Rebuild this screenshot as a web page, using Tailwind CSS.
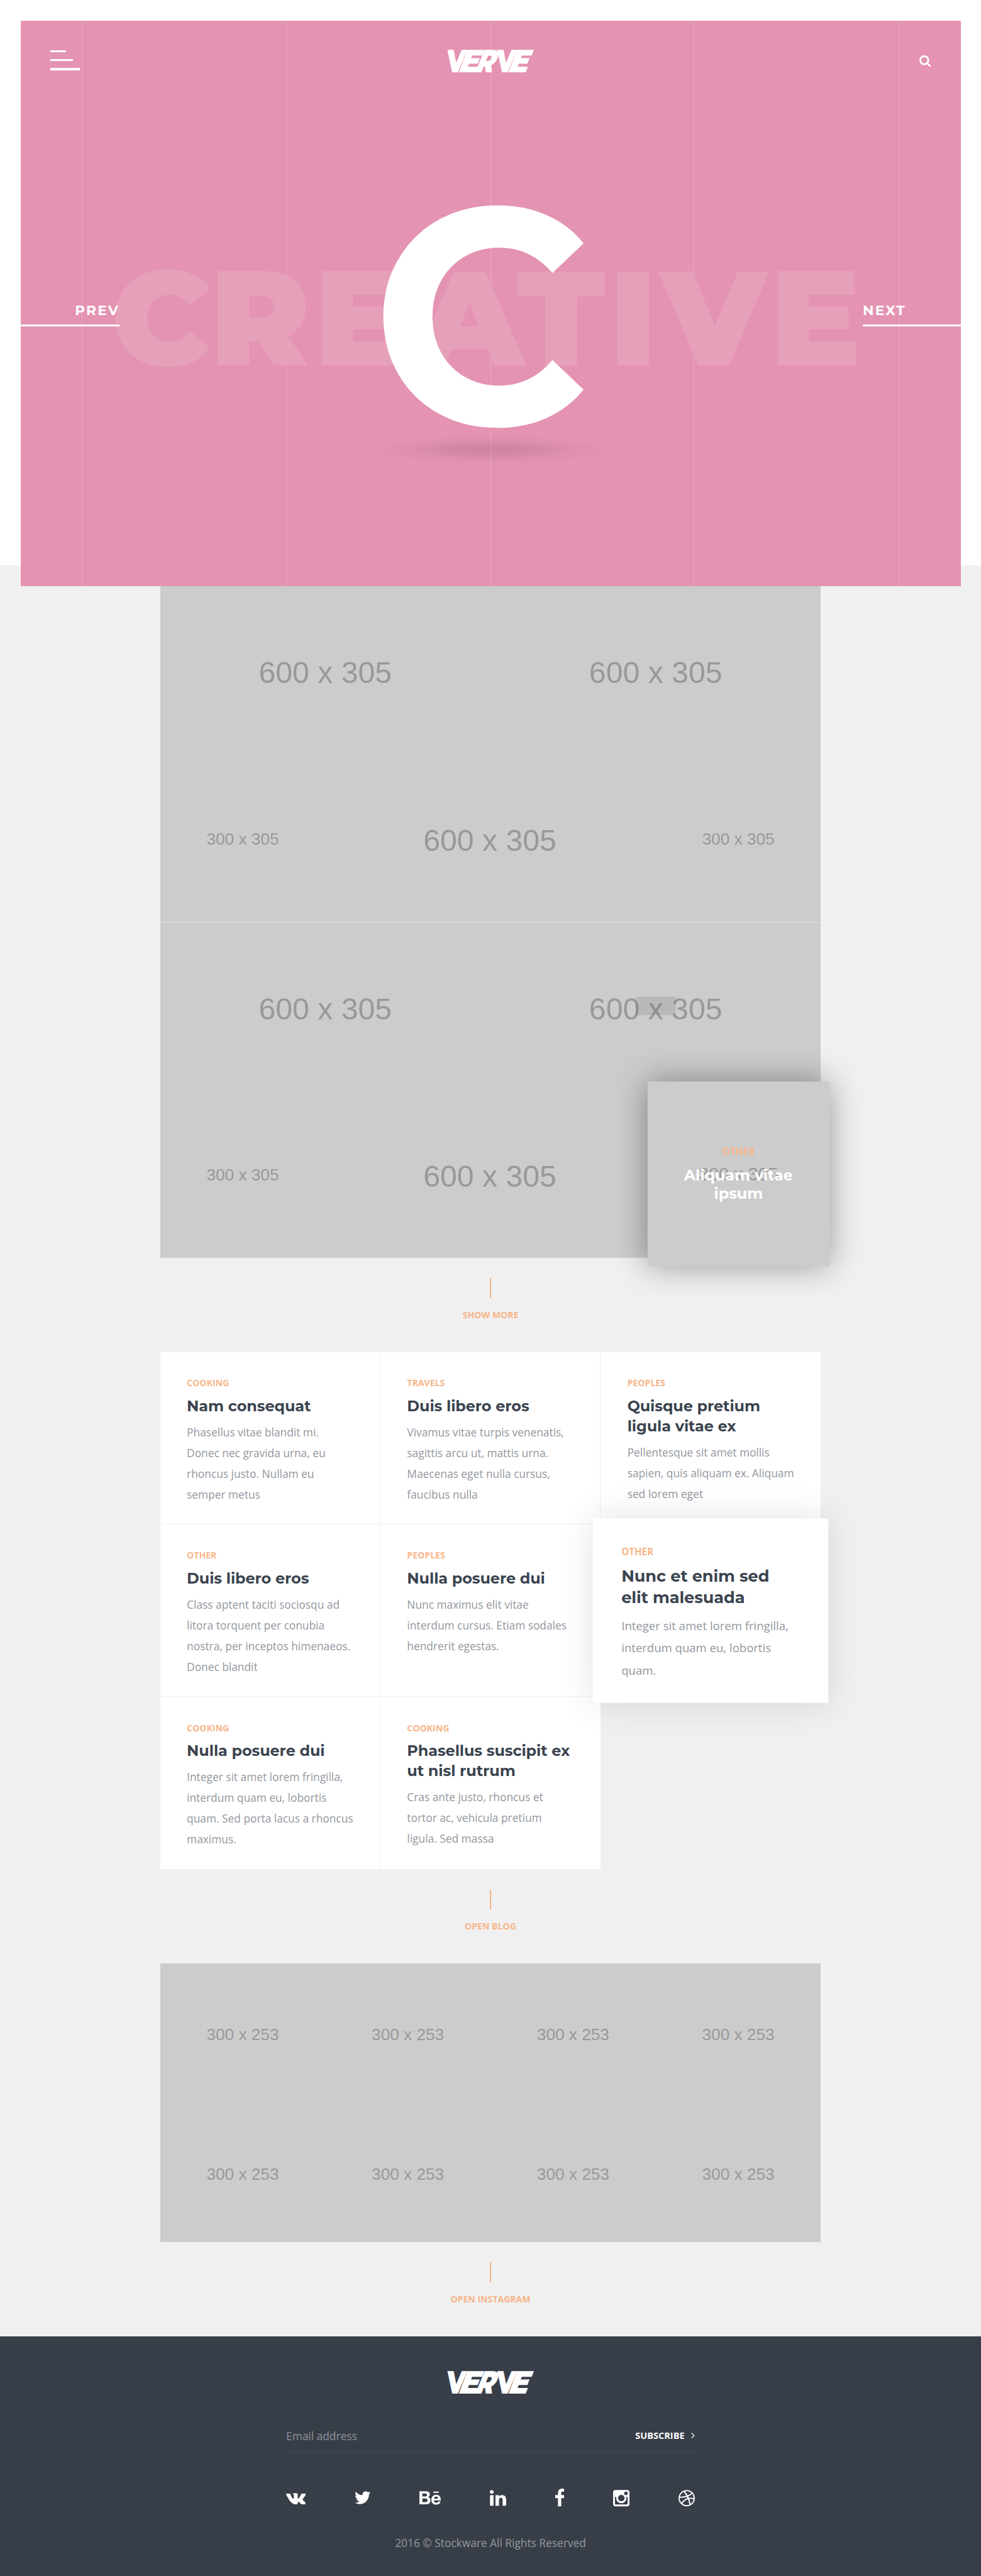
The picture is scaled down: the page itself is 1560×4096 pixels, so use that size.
<!DOCTYPE html>
<html lang="en">
<head>
<meta charset="utf-8">
<title>Verve</title>
<script src="https://cdn.jsdelivr.net/npm/@tailwindcss/browser@4"></script>
</head>
<body class="bg-[#f0f0f0] font-['Open_Sans',sans-serif] antialiased">

<!-- Hero slider -->
<div class="h-[899.2px] bg-white px-[32.5px] pt-[32.5px]">
  <header class="relative z-10 h-[899.2px] overflow-hidden bg-[#e493b2]">
    <!-- column guides -->
    <i class="absolute inset-y-0 left-[97.5px] w-px bg-white/20"></i>
    <i class="absolute inset-y-0 left-[423.5px] w-px bg-white/20"></i>
    <i class="absolute inset-y-0 left-[747.5px] w-px bg-white/20"></i>
    <i class="absolute inset-y-0 left-[1070.5px] w-px bg-white/20"></i>
    <i class="absolute inset-y-0 left-[1396.5px] w-px bg-white/20"></i>

    <!-- slide artwork -->
    <svg class="absolute inset-0 h-full w-full" viewBox="32.5 32.5 1495 899.2" font-family="Montserrat, sans-serif">
      <defs><radialGradient id="sh"><stop offset="0" stop-color="#4a2a40" stop-opacity=".15"/><stop offset=".35" stop-color="#4a2a40" stop-opacity=".11"/><stop offset=".7" stop-color="#4a2a40" stop-opacity=".03"/><stop offset="1" stop-color="#4a2a40" stop-opacity="0"/></radialGradient></defs>
      <text x="176.6 333.4 499.1 660.3 822 969 1050.6 1223.9" y="580.3" font-size="213.8" font-weight="900" fill="#e6a0ba">CREATIVE</text>
      <ellipse cx="780" cy="714.3" rx="188" ry="23" fill="url(#sh)"/>
      <text transform="matrix(.975 0 0 1 590.4 674.1)" font-size="489" font-weight="700" fill="#fff">C</text>
    </svg>

    <nav class="relative flex items-start justify-between pt-[46px] pr-[47.5px] pl-[47.6px]">
      <div class="mt-[1.7px] flex w-[135px] flex-col gap-[10.8px]">
        <i class="h-[3.25px] w-[25px] bg-white"></i>
        <i class="h-[3.25px] w-[36px] bg-white"></i>
        <i class="h-[3.25px] w-[46.8px] bg-white"></i>
      </div>
      <svg class="h-[35.8px] w-[135.4px] overflow-visible" viewBox="0 0 250 66" font-family="Montserrat, sans-serif" font-weight="900" font-size="94.3" fill="#fff">
        <text transform="matrix(.75 0 -.106 1 -6.5 66)">V</text><text transform="matrix(.92 0 -.38 1 27.5 66)">E</text><text transform="matrix(.77 0 -.41 1 77 66)">R</text><text transform="matrix(.75 0 -.106 1 140 66)">V</text><text transform="matrix(.92 0 -.38 1 173.5 66)">E</text>
      </svg>
      <div class="flex w-[135px] justify-end pt-[9.5px]">
        <svg class="size-[18.4px]" viewBox="64 128 1664 1664" fill="#fff"><path d="M1216 832q0-185-131.5-316.5t-316.5-131.5-316.5 131.5-131.5 316.5 131.5 316.5 316.5 131.5 316.5-131.5 131.5-316.5zm512 832q0 52-38 90t-90 38q-54 0-90-38l-343-342q-179 124-399 124-143 0-273.5-55.5t-225-150-150-225-55.5-273.5 55.5-273.5 150-225 225-150 273.5-55.5 273.5 55.5 225 150 150 225 55.5 273.5q0 220-124 399l343 343q37 37 37 90z"/></svg>
      </div>
    </nav>

    <div class="relative mt-[364.4px] flex justify-between font-['Montserrat',sans-serif] text-[21.67px] leading-[28px] font-bold tracking-[2.17px] text-white">
      <a class="w-[157.5px] border-b-[3.25px] border-white pb-[9px] text-right">PREV</a>
      <a class="w-[155.5px] border-b-[3.25px] border-white pb-[9px]">NEXT</a>
    </div>
  </header>
</div>

<!-- Works -->
<section class="mx-auto mt-[32.5px] w-[1050.8px] font-['Liberation_Sans',sans-serif] text-[#999]">
  <div class="h-[534.1px] bg-[#ccc]">
    <div class="grid h-1/2 grid-cols-2 place-items-center pt-[7.8px] text-[48.2px]"><span>600 x 305</span><span>600 x 305</span></div>
    <div class="grid h-1/2 grid-cols-4 place-items-center text-[26.2px]"><span class="pt-[4.6px]">300 x 305</span><span class="col-span-2 pt-[7.8px] pr-[2px] text-[48.2px]">600 x 305</span><span class="pt-[4.6px]">300 x 305</span></div>
  </div>
  <div class="h-[534.1px] border-t border-[#dfdfdf] bg-[#ccc]">
    <div class="grid h-1/2 grid-cols-2 place-items-center pt-[7.8px] text-[48.2px]"><span>600 x 305</span>
      <span class="relative">600 x 305<i class="absolute top-[17.5px] left-1/2 h-[28.7px] w-[63px] -translate-x-1/2 bg-[#3b444f]/14"></i></span></div>
    <div class="grid h-1/2 grid-cols-4 place-items-center text-[26.2px]"><span class="pt-[4.6px]">300 x 305</span><span class="col-span-2 pt-[7.8px] pr-[2px] text-[48.2px]">600 x 305</span>
      <div class="relative z-10 flex h-full w-full scale-[1.1] items-center justify-center bg-[#ccc] shadow-[0_0_44px_rgba(0,0,0,.38)]">
        <span class="pt-[3.4px]">300 x 305</span>
        <div class="absolute inset-0 flex flex-col items-center justify-center gap-[9.9px] text-center">
          <span class="font-['Open_Sans',sans-serif] text-[14.08px] leading-[20px] font-bold text-[#f7b588]">OTHER</span>
          <h3 class="font-['Montserrat',sans-serif] text-[21.67px] leading-[26.1px] font-bold text-white">Aliquam vitae<br>ipsum</h3>
        </div>
      </div>
    </div>
  </div>
</section>

<div class="flex h-[150px] flex-col items-center pt-[32.5px] text-[14.08px] leading-[20px] font-bold text-[#f7b588]"><i class="h-[31.4px] w-[2.2px] bg-[#f7b588]"></i><a class="mt-[16.8px]">SHOW MORE</a></div>

<!-- Blog -->
<section class="mx-auto grid w-[1050.8px] auto-rows-[274.1px] grid-cols-3 text-[17.33px] leading-[32.93px] whitespace-nowrap text-[#94979e]">
  <article class="border-r border-b border-[#f0f0f0] bg-white pt-[39.5px] pl-[42.5px]">
    <p class="text-[14.08px] leading-[20px] font-bold text-[#f7b588]">COOKING</p>
    <h3 class="mt-[10.7px] mb-[9.3px] font-['Montserrat',sans-serif] text-[23.83px] leading-[31.7px] font-bold text-[#3b444f]">Nam consequat</h3>
    <p>Phasellus vitae blandit mi.<br>Donec nec gravida urna, eu<br>rhoncus justo. Nullam eu<br>semper metus</p>
  </article>
  <article class="border-r border-b border-[#f0f0f0] bg-white pt-[39.5px] pl-[42.5px]">
    <p class="text-[14.08px] leading-[20px] font-bold text-[#f7b588]">TRAVELS</p>
    <h3 class="mt-[10.7px] mb-[9.3px] font-['Montserrat',sans-serif] text-[23.83px] leading-[31.7px] font-bold text-[#3b444f]">Duis libero eros</h3>
    <p>Vivamus vitae turpis venenatis,<br>sagittis arcu ut, mattis urna.<br>Maecenas eget nulla cursus,<br>faucibus nulla</p>
  </article>
  <article class="border-b border-[#f0f0f0] bg-white pt-[39.5px] pl-[42.5px]">
    <p class="text-[14.08px] leading-[20px] font-bold text-[#f7b588]">PEOPLES</p>
    <h3 class="mt-[10.7px] mb-[9.3px] font-['Montserrat',sans-serif] text-[23.83px] leading-[31.7px] font-bold text-[#3b444f]">Quisque pretium<br>ligula vitae ex</h3>
    <p>Pellentesque sit amet mollis<br>sapien, quis aliquam ex. Aliquam<br>sed lorem eget</p>
  </article>
  <article class="border-r border-b border-[#f0f0f0] bg-white pt-[39.5px] pl-[42.5px]">
    <p class="text-[14.08px] leading-[20px] font-bold text-[#f7b588]">OTHER</p>
    <h3 class="mt-[10.7px] mb-[9.3px] font-['Montserrat',sans-serif] text-[23.83px] leading-[31.7px] font-bold text-[#3b444f]">Duis libero eros</h3>
    <p>Class aptent taciti sociosqu ad<br>litora torquent per conubia<br>nostra, per inceptos himenaeos.<br>Donec blandit</p>
  </article>
  <article class="border-r border-b border-[#f0f0f0] bg-white pt-[39.5px] pl-[42.5px]">
    <p class="text-[14.08px] leading-[20px] font-bold text-[#f7b588]">PEOPLES</p>
    <h3 class="mt-[10.7px] mb-[9.3px] font-['Montserrat',sans-serif] text-[23.83px] leading-[31.7px] font-bold text-[#3b444f]">Nulla posuere dui</h3>
    <p>Nunc maximus elit vitae<br>interdum cursus. Etiam sodales<br>hendrerit egestas.</p>
  </article>
  <article class="relative z-10 scale-[1.07] bg-white pt-[39.5px] pl-[42.5px] shadow-[0_0_50px_rgba(0,0,0,.12)]">
    <p class="text-[14.08px] leading-[20px] font-bold text-[#f7b588]">OTHER</p>
    <h3 class="mt-[10.7px] mb-[9.3px] font-['Montserrat',sans-serif] text-[23.83px] leading-[31.7px] font-bold text-[#3b444f]">Nunc et enim sed<br>elit malesuada</h3>
    <p>Integer sit amet lorem fringilla,<br>interdum quam eu, lobortis<br>quam.</p>
  </article>
  <article class="border-r border-[#f0f0f0] bg-white pt-[39.5px] pl-[42.5px]">
    <p class="text-[14.08px] leading-[20px] font-bold text-[#f7b588]">COOKING</p>
    <h3 class="mt-[10.7px] mb-[9.3px] font-['Montserrat',sans-serif] text-[23.83px] leading-[31.7px] font-bold text-[#3b444f]">Nulla posuere dui</h3>
    <p>Integer sit amet lorem fringilla,<br>interdum quam eu, lobortis<br>quam. Sed porta lacus a rhoncus<br>maximus.</p>
  </article>
  <article class="bg-white pt-[39.5px] pl-[42.5px]">
    <p class="text-[14.08px] leading-[20px] font-bold text-[#f7b588]">COOKING</p>
    <h3 class="mt-[10.7px] mb-[9.3px] font-['Montserrat',sans-serif] text-[23.83px] leading-[31.7px] font-bold text-[#3b444f]">Phasellus suscipit ex<br>ut nisl rutrum</h3>
    <p>Cras ante justo, rhoncus et<br>tortor ac, vehicula pretium<br>ligula. Sed massa</p>
  </article>
</section>

<div class="flex h-[150px] flex-col items-center pt-[32.5px] text-[14.08px] leading-[20px] font-bold text-[#f7b588]"><i class="h-[31.4px] w-[2.2px] bg-[#f7b588]"></i><a class="mt-[17px]">OPEN BLOG</a></div>

<!-- Instagram -->
<section class="mx-auto grid h-[442.8px] w-[1050.8px] grid-cols-4 grid-rows-2 place-items-center bg-[#ccc] font-['Liberation_Sans',sans-serif] text-[26.2px] text-[#999]">
  <span class="pt-[6.2px]">300 x 253</span><span class="pt-[6.2px]">300 x 253</span><span class="pt-[6.2px]">300 x 253</span><span class="pt-[6.2px]">300 x 253</span>
  <span class="pt-[6.2px]">300 x 253</span><span class="pt-[6.2px]">300 x 253</span><span class="pt-[6.2px]">300 x 253</span><span class="pt-[6.2px]">300 x 253</span>
</section>

<div class="flex h-[150.5px] flex-col items-center pt-[32.5px] text-[14.08px] leading-[20px] font-bold text-[#f7b588]"><i class="h-[31.4px] w-[2.2px] bg-[#f7b588]"></i><a class="mt-[17px]">OPEN INSTAGRAM</a></div>

<footer class="flex h-[380.7px] flex-col items-center bg-[#383e48] pt-[54.4px]">
  <svg class="h-[35.8px] w-[135.4px] shrink-0 overflow-visible" viewBox="0 0 250 66" font-family="Montserrat, sans-serif" font-weight="900" font-size="94.3" fill="#fff">
    <text transform="matrix(.75 0 -.106 1 -6.5 66)">V</text><text transform="matrix(.92 0 -.38 1 27.5 66)">E</text><text transform="matrix(.77 0 -.41 1 77 66)">R</text><text transform="matrix(.75 0 -.106 1 140 66)">V</text><text transform="matrix(.92 0 -.38 1 173.5 66)">E</text>
  </svg>
  <form class="mt-[52.5px] flex w-[650px] items-center justify-between border-b border-[#464d57] pb-[11.2px] text-[17.33px] leading-[30px] text-[#8f9299]">
    <span>Email address</span>
    <span class="flex items-center gap-[10.9px] text-[14.5px] font-bold text-white">SUBSCRIBE<svg class="h-[9.4px] w-[5.6px]" viewBox="0 0 5.6 9.4" fill="none" stroke="#fff" stroke-width="1.2"><path d="M.6.5 4.8 4.7.6 8.9"/></svg></span>
  </form>
  <div class="mt-[56.3px] flex h-[30.33px] w-[650px] items-start justify-between">
    <svg class="mt-[.4px] h-[29.3px] w-[31.4px]" viewBox="-65 0 1921 1792" fill="#fff"><path d="M1853 520q23 64-150 294-24 32-65 85-78 100-90 131-17 41 14 81 17 21 81 82h1l1 1 1 1 2 2q141 131 191 221 3 5 6.5 12.5t7 26.500-.5 34-25 27.500-59 12.500l-256 4q-24 5-56-5t-52-22l-20-12q-30-21-70-64t-68.500-77.500-61-58-56.500-15.500q-3 1-8 3.500t-17 14.500-21.500 29.500-17 52-6.500 77.500q0 15-3.500 27.500t-7.500 18.500l-4 5q-18 19-53 22h-115q-71 4-146-16.500t-131.500-53-103-66-70.500-57.500l-25-24q-10-10-27.500-30t-71.500-91-106-151-122.500-211-130.500-272q-6-16-6-27t3-16l4-6q15-19 57-19l274-2q12 2 23 6.500t16 8.500l5 3q16 11 24 32 20 50 46 103.500t41 81.500l16 29q29 60 56 104t48.500 68.500 41.500 38.500 34 14 27-5q2-1 5-5t12-22 13.500-47 9.500-81 0-125q-2-40-9-73t-14-46l-6-12q-25-34-85-43-13-2 5-24 17-19 38-30 53-26 239-24 82 1 135 13 20 5 33.500 13.500t20.500 24 10.500 32 3.500 45.500-1 55-2.500 70.500-1.500 82.500q0 11-1 42t-.5 48 3.500 40.500 11.500 39 22.500 24.500q8 2 17 4t26-11 38-34.500 52-67 68-107.500q60-104 107-225 4-10 10-17.500t11-10.500l4-3 5-2.500 13-3 20-.5 288-2q39-5 64 2.500t31 16.500z"/></svg>
    <svg class="mt-[.4px] h-[28.8px] w-[25.3px]" viewBox="108 0 1576 1792" fill="#fff"><path d="M1684 408q-67 98-162 167 1 14 1 42 0 130-38 259.500t-115.500 248.500-184.500 210.500-258 146-323 54.500q-271 0-496-145 35 4 78 4 225 0 401-138-105-2-188-64.500t-114-159.500q33 5 61 5 43 0 85-11-112-23-185.500-111.500t-73.500-205.500v-4q68 38 146 41-66-44-105-115t-39-154q0-88 44-163 121 149 294.500 238.500t371.500 99.500q-8-38-8-74 0-134 94.500-228.500t228.500-94.500q140 0 236 102 109-21 205-78-37 115-142 178 93-10 186-50z"/></svg>
    <svg class="h-[29.75px] w-[34px]" viewBox="0 0 2048 1792" fill="#fff"><path d="M1848 339h-511v-124h511v124zm-252 365q-90 0-146 52.500t-62 142.500h408q-18-195-200-195zm16 585q63 0 122-32t76-87h221q-100 307-427 307-214 0-340.500-132t-126.500-347q0-208 130.500-345.500t336.500-137.500q138 0 240.500 68t153 179 50.500 248q0 17-2 47h-658q0 111 57.500 171.500t166.500 60.500zm-1335-58h296q205 0 205-167 0-180-199-180h-302v347zm0-537h281q78 0 123.500-36.500t45.500-113.500q0-144-190-144h-260v294zm-277-509h594q87 0 155 14t126.500 47.500 90 96.500 31.500 154q0 181-172 263 114 32 172 115t58 204q0 75-24.500 136.500t-66 103.500-98.500 71-121 42-134 13h-611v-1260z" transform="translate(0 66)"/></svg>
    <svg class="h-[30.33px] w-[25.9px]" viewBox="134 0 1530 1792" fill="#fff"><path d="M477 625v991h-330v-991h330zm21-306q1 73-50.500 122t-135.500 49h-2q-82 0-132-49t-50-122q0-74 51.500-122.500t134.500-48.500 133 48.500 51 122.500zm1166 729v568h-329v-530q0-105-40.500-164.500t-126.500-59.500q-63 0-105.500 34.500t-63.500 85.500q-11 30-11 81v553h-329q2-399 2-647t-1-296l-1-48h329v144h-2q20-32 41-56t56.500-52 87-43.500 114.500-15.500q171 0 275 113.500t104 332.500z"/></svg>
    <svg class="h-[30.33px] w-[14.6px]" viewBox="479 0 864 1792" fill="#fff"><path d="M1343 12v264h-157q-86 0-116 36t-30 108v189h293l-39 296h-254v759h-306v-759h-255v-296h255v-218q0-186 104-288.500t277-102.500q147 0 228 12z"/></svg>
    <svg class="h-[30.33px] w-[26px]" viewBox="128 0 1536 1792" fill="#fff"><path d="M1490 1426v-648h-135q20 63 20 131 0 126-64 232.500t-174 168.500-240 62q-197 0-337-135.500t-140-327.500q0-68 20-131h-141v648q0 26 17.500 43.500t43.500 17.500h1069q25 0 43-17.500t18-43.500zm-284-533q0-124-90.500-211.500t-218.500-87.500q-127 0-217.500 87.500t-90.500 211.500 90.500 211.500 217.500 87.500q128 0 218.500-87.500t90.500-211.500zm284-360v-165q0-28-20-48.500t-49-20.500h-174q-29 0-49 20.500t-20 48.500v165q0 29 20 49t49 20h174q29 0 49-20t20-49zm174-208v1142q0 81-58 139t-139 58h-1142q-81 0-139-58t-58-139v-1142q0-81 58-139t139-58h1142q81 0 139 58t58 139z"/></svg>
    <svg class="h-[30.33px] w-[26px]" viewBox="128 0 1536 1792" fill="#fff"><path d="M1152 1500q-42-241-140-498h-2l-2 1q-16 6-43 16.500t-101 49-137 82-131 114.500-103 148l-15-11q184 150 418 150 132 0 256-52zm-185-607q-21-49-53-111-311 93-673 93-1 7-1 21 0 124 44 236.500t124 201.500q50-89 123.500-166.500t142.500-124.500 130.500-81 99.500-48l37-13q4-1 13-3.500t13-4.500zm-107-212q-120-213-244-378-138 65-234 186t-128 272q302 0 606-80zm684 319q-210-60-409-29 87 239 128 469 111-75 185-189.500t96-250.500zm-805-741q-1 0-2 1 1-1 2-1zm590 145q-185-164-433-164-76 0-155 19 131 170 246 382 69-26 130-60.500t96.500-61.500 65.500-57 37.500-40.500zm223 485q-3-232-149-410l-1 1q-9 12-19 24.500t-43.500 44.500-71 60.500-100 65-131.500 64.500q25 53 44 95 2 5 6.500 17t7.500 17q36-5 74.500-7t73.500-2 69 1.500 64 4 56.500 5.500 48 6.500 36.500 6 25 4.500zm112 7q0 209-103 385.500t-279.500 279.500-385.500 103-385.500-103-279.500-279.500-103-385.500 103-385.500 279.500-279.500 385.500-103 385.500 103 279.500 279.500 103 385.500z"/></svg>
  </div>
  <p class="mt-[40.6px] text-[17.33px] leading-[30px] text-[#94979e]">2016 © Stockware All Rights Reserved</p>
</footer>
</body>
</html>
